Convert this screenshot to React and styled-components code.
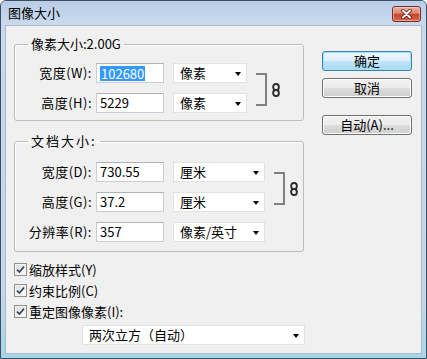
import React from 'react';
import styled, { createGlobalStyle } from 'styled-components';

const GlobalStyle = createGlobalStyle`
  html, body {
    margin: 0;
    padding: 0;
    background: #ffffff;
  }
  body {
    font-family: "Noto Sans CJK SC", "Noto Sans", sans-serif;
    font-size: 13px;
    color: #000;
  }
`;

const Window = styled.div`
  width: 427px;
  height: 359px;
  box-sizing: border-box;
  display: flex;
  flex-direction: column;
  border: 1px solid #3d4f61;
  border-radius: 6px 6px 0 0;
  background: linear-gradient(#bed1ea 0%, #c9d9ee 10%, #c3d6ea 85%, #a6d6e8 100%);
  overflow: hidden;
`;

const TitleBar = styled.div`
  height: 24px;
  flex: none;
  display: flex;
  align-items: center;
  justify-content: space-between;
  padding: 0 5px 0 7px;
  background: linear-gradient(#b9cde7, #cbdaee);
`;

const Title = styled.span`
  font-size: 13px;
  line-height: 16px;
  color: #000;
`;

const CloseButton = styled.div`
  width: 29px;
  height: 16px;
  margin-top: 5px;
  align-self: flex-start;
  box-sizing: border-box;
  border: 1px solid #6d2f27;
  border-radius: 3px;
  display: flex;
  align-items: center;
  justify-content: center;
  background: linear-gradient(#eeb0a2 0%, #dc8670 45%, #c8452c 50%, #d9664c 100%);
  box-shadow: inset 0 0 0 1px rgba(255, 220, 210, 0.5);
`;

const Body = styled.div`
  flex: 1;
  margin: 0 4px 4px 4px;
  border: 1px solid #a9b9cc;
  background: #f0f0f0;
  display: flex;
  padding: 10px 0 0 8px;
`;

const LeftColumn = styled.div`
  width: 290px;
  display: flex;
  flex-direction: column;
`;

const RightColumn = styled.div`
  margin-left: 18px;
  padding-top: 15px;
  display: flex;
  flex-direction: column;
`;

const Group = styled.fieldset`
  margin: ${p => p.$top || 0}px 0 0 0;
  padding: ${p => p.$pt}px 0 ${p => p.$pb}px 0;
  border: 1px solid #bcbcbc;
  border-radius: 3px;
  box-shadow: inset 1px 1px 0 #ffffff;
  min-inline-size: 0;
  width: 290px;
  box-sizing: border-box;
  display: flex;
  align-items: flex-start;
`;

const Legend = styled.legend`
  margin-left: 13px;
  padding: 0 3px;
  font-size: 13px;
  line-height: 16px;
  letter-spacing: ${p => (p.$spaced ? '2px' : '0')};
`;

const Rows = styled.div`
  display: flex;
  flex-direction: column;
  gap: 10px;
`;

const Row = styled.div`
  display: flex;
  align-items: center;
  height: 20px;
`;

const Label = styled.label`
  width: 77px;
  margin-right: 4px;
  text-align: right;
  font-size: 13px;
  line-height: 20px;
  letter-spacing: 0.5px;
  white-space: nowrap;
`;

const Field = styled.div`
  width: 68px;
  height: 20px;
  box-sizing: border-box;
  border: 1px solid #c9ced6;
  border-top-color: #aeb3ba;
  background: #ffffff;
  padding-left: 3px;
  font-size: 13px;
  line-height: 18px;
  display: flex;
  align-items: center;
`;

const Selected = styled.span`
  background: #3399ff;
  color: #ffffff;
  line-height: 15px;
  padding: 0 1px;
`;

const Select = styled.div`
  width: ${p => p.$w}px;
  height: 20px;
  margin-left: ${p => (p.$ml === undefined ? 9 : p.$ml)}px;
  box-sizing: border-box;
  border: 1px solid #e2e2e2;
  background: #ffffff;
  padding: 0 5px 0 6px;
  display: flex;
  align-items: center;
  justify-content: space-between;
  font-size: 13px;
  line-height: 18px;
`;

const Arrow = styled.span`
  width: 0;
  height: 0;
  border-left: 3.5px solid transparent;
  border-right: 3.5px solid transparent;
  border-top: 4px solid #000;
  margin-top: 2px;
`;

const Link = styled.div`
  display: flex;
  align-items: center;
  margin: 10px 0 0 9px;
`;

const Bracket = styled.div`
  width: 9px;
  height: 29px;
  border: 2px solid #808080;
  border-left: none;
`;

const LinkIcon = styled.svg`
  margin-left: ${p => p.$gap}px;
  display: block;
`;

const Checks = styled.div`
  margin-top: 7px;
  display: flex;
  flex-direction: column;
`;

const CheckRow = styled.div`
  height: 21px;
  display: flex;
  align-items: center;
  font-size: 13px;
  line-height: 21px;
`;

const Box = styled.span`
  width: 13px;
  height: 13px;
  box-sizing: border-box;
  border: 1px solid #8e8f8f;
  background: linear-gradient(135deg, #dcdcdc, #fbfbfb);
  box-shadow: inset 0 0 0 1px #f4f4f4;
  margin-right: 2px;
  display: flex;
  align-items: center;
  justify-content: center;
`;

const Button = styled.button`
  width: 90px;
  height: 20px;
  margin-top: ${p => p.$mt || 0}px;
  box-sizing: border-box;
  padding: 0;
  border: 1px solid ${p => (p.$primary ? '#3c7fb1' : '#707070')};
  border-radius: 3px;
  background: ${p =>
    p.$primary
      ? 'linear-gradient(#ecf6fd 0%, #dcf0fb 50%, #c1e5f9 50%, #a9d9f5 100%)'
      : 'linear-gradient(#f2f2f2 0%, #ebebeb 50%, #dddddd 50%, #cfcfcf 100%)'};
  box-shadow: inset 0 0 0 1px ${p => (p.$primary ? '#9fe3fb' : '#fcfcfc')};
  font-family: "Noto Sans CJK SC", "Noto Sans", sans-serif;
  font-size: 13px;
  line-height: 16px;
  color: #000;
`;

const Resample = styled(Select)`
  margin-top: 3px;
`;

const ChainIcon = ({ gap }) => (
  <LinkIcon $gap={gap} width="8" height="14" viewBox="0 0 8 14">
    <rect x="1.2" y="1" width="5.6" height="6" rx="2.6" fill="none" stroke="#2b2b2b" strokeWidth="1.9" />
    <rect x="1.2" y="7" width="5.6" height="6" rx="2.6" fill="none" stroke="#2b2b2b" strokeWidth="1.9" />
  </LinkIcon>
);

const CheckMark = () => (
  <svg width="9" height="9" viewBox="0 0 9 9">
    <path d="M1 4.6 L3.4 7 L8 1.6" fill="none" stroke="#3a4660" strokeWidth="1.7" />
  </svg>
);

const Check = ({ children }) => (
  <CheckRow>
    <Box>
      <CheckMark />
    </Box>
    {children}
  </CheckRow>
);

export default function App() {
  return (
    <>
      <GlobalStyle />
      <Window>
        <TitleBar>
          <Title>图像大小</Title>
          <CloseButton>
            <svg width="13" height="10" viewBox="0 0 13 10">
              <path d="M3 1.5 L10 8.5 M10 1.5 L3 8.5" stroke="#5a1c14" strokeWidth="3.6" strokeLinecap="round" />
              <path d="M3 1.5 L10 8.5 M10 1.5 L3 8.5" stroke="#ffffff" strokeWidth="2" strokeLinecap="round" />
            </svg>
          </CloseButton>
        </TitleBar>
        <Body>
          <LeftColumn>
            <Group $pt={11} $pb={7}>
              <Legend>像素大小:2.00G</Legend>
              <Rows>
                <Row>
                  <Label>宽度(W):</Label>
                  <Field>
                    <Selected>102680</Selected>
                  </Field>
                  <Select $w={74}>
                    像素
                    <Arrow />
                  </Select>
                </Row>
                <Row>
                  <Label>高度(H):</Label>
                  <Field>5229</Field>
                  <Select $w={74}>
                    像素
                    <Arrow />
                  </Select>
                </Row>
              </Rows>
              <Link>
                <Bracket />
                <ChainIcon gap={5} />
              </Link>
            </Group>

            <Group $top={12} $pt={13} $pb={9}>
              <Legend $spaced>文档大小:</Legend>
              <Rows>
                <Row>
                  <Label>宽度(D):</Label>
                  <Field>730.55</Field>
                  <Select $w={92}>
                    厘米
                    <Arrow />
                  </Select>
                </Row>
                <Row>
                  <Label>高度(G):</Label>
                  <Field>37.2</Field>
                  <Select $w={92}>
                    厘米
                    <Arrow />
                  </Select>
                </Row>
                <Row>
                  <Label>分辨率(R):</Label>
                  <Field>357</Field>
                  <Select $w={92}>
                    像素/英寸
                    <Arrow />
                  </Select>
                </Row>
              </Rows>
              <Link>
                <Bracket />
                <ChainIcon gap={5} />
              </Link>
            </Group>

            <Checks>
              <Check>缩放样式(Y)</Check>
              <Check>约束比例(C)</Check>
              <Check>重定图像像素(I):</Check>
            </Checks>
            <Resample $w={223} $ml={68}>
              两次立方（自动）
              <Arrow />
            </Resample>
          </LeftColumn>

          <RightColumn>
            <Button $primary>确定</Button>
            <Button $mt={7}>取消</Button>
            <Button $mt={17}>自动(A)...</Button>
          </RightColumn>
        </Body>
      </Window>
    </>
  );
}
